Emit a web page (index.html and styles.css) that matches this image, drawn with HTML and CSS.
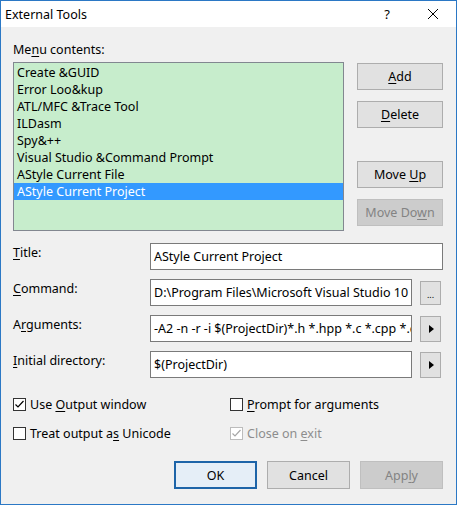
FILE: index.html
```html
<!DOCTYPE html>
<html lang="en">
<head>
  <meta charset="UTF-8" />
  <title>External Tools</title>
  <link rel="stylesheet" href="styles.css">
</head>
<body>
  <div class="window">
    <div class="titlebar">
      <span class="caption">External Tools</span>
      <span class="help">?</span>
      <svg class="close" width="12" height="12" viewBox="0 0 12 12">
        <path d="M1 1 L11 11 M11 1 L1 11" stroke="#000" stroke-width="1" fill="none" />
      </svg>
    </div>

    <div class="content">
      <div class="menu-label">Me<u>n</u>u contents:</div>

      <div class="menu-row">
        <ul class="listbox">
          <li>Create &amp;GUID</li>
          <li>Error Loo&amp;kup</li>
          <li>ATL/MFC &amp;Trace Tool</li>
          <li>ILDasm</li>
          <li>Spy&amp;++</li>
          <li>Visual Studio &amp;Command Prompt</li>
          <li>AStyle Current File</li>
          <li class="selected">AStyle Current Project</li>
        </ul>
        <div class="side-buttons">
          <button class="btn"><u>A</u>dd</button>
          <button class="btn"><u>D</u>elete</button>
          <button class="btn move-up">Move <u>U</u>p</button>
          <button class="btn disabled">Move Do<u>w</u>n</button>
        </div>
      </div>

      <div class="fields">
        <label class="field-label"><u>T</u>itle:</label>
        <div class="field">
          <div class="input full">AStyle Current Project</div>
        </div>

        <label class="field-label"><u>C</u>ommand:</label>
        <div class="field">
          <div class="input">D:\Program Files\Microsoft Visual Studio 10</div>
          <button class="small-btn dots">...</button>
        </div>

        <label class="field-label">A<u>r</u>guments:</label>
        <div class="field">
          <div class="input">-A2 -n -r -i $(ProjectDir)*.h *.hpp *.c *.cpp *.cxx</div>
          <button class="small-btn"><span class="arrow"></span></button>
        </div>

        <label class="field-label"><u>I</u>nitial directory:</label>
        <div class="field">
          <div class="input">$(ProjectDir)</div>
          <button class="small-btn"><span class="arrow"></span></button>
        </div>
      </div>

      <div class="options">
        <div class="check">
          <span class="box checked">
            <svg width="11" height="11" viewBox="0 0 11 11"><path d="M1.5 5.5 L4 8 L9.5 2" stroke="#000" stroke-width="1.2" fill="none" /></svg>
          </span>
          <span>Use <u>O</u>utput window</span>
        </div>
        <div class="check">
          <span class="box"></span>
          <span><u>P</u>rompt for arguments</span>
        </div>
        <div class="check">
          <span class="box"></span>
          <span>Treat output a<u>s</u> Unicode</span>
        </div>
        <div class="check disabled">
          <span class="box checked">
            <svg width="11" height="11" viewBox="0 0 11 11"><path d="M1.5 5.5 L4 8 L9.5 2" stroke="#a6a6a6" stroke-width="1.2" fill="none" /></svg>
          </span>
          <span>Close on <u>e</u>xit</span>
        </div>
      </div>

      <div class="dialog-buttons">
        <button class="btn default">OK</button>
        <button class="btn">Cancel</button>
        <button class="btn disabled">App<u>l</u>y</button>
      </div>
    </div>
  </div>
</body>
</html>
```

FILE: styles.css
```css
body {
  margin: 0;
  font-family: 'Noto Sans', 'Open Sans', sans-serif;
  font-size: 12.5px;
  color: #000;
  background-color: #f0f0f0;
}

u {
  text-decoration-thickness: 1px;
  text-underline-offset: 2px;
}

.window {
  width: 457px;
  height: 505px;
  box-sizing: border-box;
  border: 1px solid #2b78c5;
  background-color: #f0f0f0;
  overflow: hidden;
}

.titlebar {
  height: 26px;
  background-color: #fff;
  display: flex;
  align-items: center;
  padding-left: 4px;
}

.caption {
  flex: 1;
}

.help {
  font-size: 13px;
  margin-right: 37px;
}

.close {
  margin-right: 17px;
}

.content {
  padding: 0 13px 0 12px;
}

.menu-label {
  margin-top: 14px;
  line-height: 17px;
}

.menu-row {
  display: flex;
  justify-content: space-between;
  margin-top: 4px;
}

.listbox {
  list-style: none;
  margin: 0;
  padding: 1px 0 0 0;
  width: 331px;
  height: 169px;
  box-sizing: border-box;
  border: 1px solid #828790;
  background-color: #c7edcc;
}

.listbox li {
  height: 17px;
  line-height: 17px;
  padding-left: 3px;
  white-space: nowrap;
}

.listbox li.selected {
  background-color: #3399ff;
  color: #fff;
}

.side-buttons {
  display: flex;
  flex-direction: column;
  gap: 11px;
  margin-top: 1px;
  width: 86px;
}

.btn {
  font-family: inherit;
  font-size: 12.5px;
  color: #000;
  height: 27px;
  width: 86px;
  padding: 0;
  background-color: #e1e1e1;
  border: 1px solid #adadad;
  box-sizing: border-box;
}

.side-buttons .move-up {
  margin-top: 22px;
}

.btn.disabled {
  background-color: #cccccc;
  border-color: #bfbfbf;
  color: #838383;
}

.btn.default {
  border: 2px solid #1d64a8;
  background-color: #e5eef7;
}

.fields {
  display: grid;
  grid-template-columns: 137px 1fr;
  row-gap: 9px;
  margin-top: 12px;
}

.field-label {
  line-height: 27px;
  margin-top: -4px;
}

.field {
  display: flex;
  align-items: center;
  gap: 8px;
  padding-right: 2px;
  min-width: 0;
}

.input {
  flex: 1;
  min-width: 0;
  height: 27px;
  line-height: 25px;
  box-sizing: border-box;
  border: 1px solid #7a7a7a;
  background-color: #fff;
  padding-left: 3px;
  white-space: nowrap;
  overflow: hidden;
}

.input.full {
  margin-right: -2px;
}

.small-btn {
  flex: none;
  width: 21px;
  height: 26px;
  padding: 0;
  background-color: #e1e1e1;
  border: 1px solid #adadad;
  box-sizing: border-box;
  display: flex;
  align-items: center;
  justify-content: center;
  font-family: inherit;
  font-size: 9px;
}

.small-btn.dots {
  height: 24px;
  padding-top: 4px;
}

.arrow {
  width: 0;
  height: 0;
  border-top: 4px solid transparent;
  border-bottom: 4px solid transparent;
  border-left: 5px solid #000;
  margin-left: 1px;
}

.options {
  display: grid;
  grid-template-columns: 217px 1fr;
  row-gap: 12px;
  margin-top: 18px;
}

.check {
  display: flex;
  align-items: center;
  gap: 4px;
  height: 17px;
}

.box {
  width: 13px;
  height: 13px;
  box-sizing: border-box;
  border: 1px solid #333;
  background-color: #fff;
  display: flex;
  align-items: center;
  justify-content: center;
}

.check.disabled {
  color: #8d8d8d;
}

.check.disabled .box {
  border-color: #bcbcbc;
}

.dialog-buttons {
  display: flex;
  gap: 10px;
  margin-top: 19px;
  margin-left: 161px;
}

.dialog-buttons .btn {
  width: 85px;
  height: 28px;
}
```
